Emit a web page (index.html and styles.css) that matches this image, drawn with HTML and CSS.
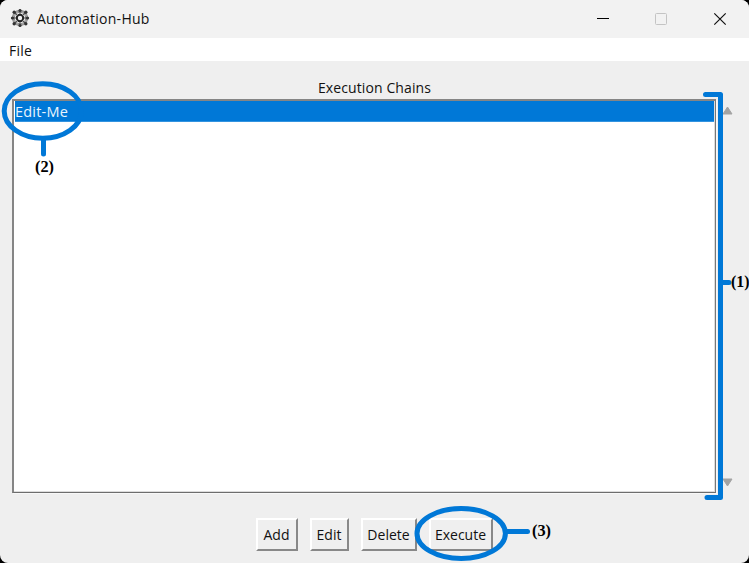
FILE: index.html
```html
<!DOCTYPE html>
<html lang="en">
<head>
<meta charset="utf-8">
<title>Automation-Hub</title>
<link rel="stylesheet" href="styles.css">
</head>
<body>
<div class="window">
  <header class="titlebar">
    <svg class="app-icon" width="20" height="20" viewBox="0 0 20 20">
      <circle cx="10" cy="10" r="7.2" fill="none" stroke="#999" stroke-width="2"/>
      <g fill="none" stroke="#444">
        <circle cx="10" cy="10" r="3.2" stroke-width="2" stroke="#222"/>
        <circle cx="10" cy="10" r="5.7" stroke-width="1" stroke="#888"/>
        <path d="M10 1v5M10 14v5M1 10h5M14 10h5M3.600 3.600l3.800 3.800M12.600 12.600l3.800 3.800M16.400 3.600l-3.800 3.800M7.400 12.600l-3.800 3.800" stroke="#555"/>
      </g>
      <g fill="#333">
        <circle cx="4.200" cy="4.200" r="1.700"/><circle cx="15.800" cy="4.200" r="1.700"/>
        <circle cx="4.200" cy="15.800" r="1.700"/><circle cx="15.800" cy="15.800" r="1.700"/>
        <circle cx="10" cy="2.500" r="1.600"/><circle cx="10" cy="17.500" r="1.600"/>
        <circle cx="2.500" cy="10" r="1.600"/><circle cx="17.500" cy="10" r="1.600"/>
      </g>
    </svg>
    <span class="title">Automation-Hub</span>
    <svg class="controls" width="132" height="14" viewBox="0 0 132 14" fill="none">
      <path d="M0 6.500h12" stroke="#000"/>
      <rect x="58.500" y="1.500" width="11" height="11" rx="1" stroke="#c4c4c4"/>
      <path d="M117.300 1.300l11.400 11.400M128.700 1.300l-11.400 11.400" stroke="#111" stroke-width="1.200"/>
    </svg>
  </header>
  <nav class="menubar"><span class="menu-item">File</span></nav>
  <main class="content">
    <h1 class="heading"><span>Execution Chains</span></h1>
    <div class="list-row">
      <div class="listbox"><div class="option"><span>Edit-Me</span></div></div>
      <div class="scrollbar">
        <svg width="11" height="9" viewBox="0 0 11 9"><path d="M5.500 1L10 8H1z" fill="#a3a3a3" stroke="#a3a3a3" stroke-linejoin="round"/></svg>
        <svg width="11" height="9" viewBox="0 0 11 9"><path d="M5.500 8L10 1H1z" fill="#a3a3a3" stroke="#a3a3a3" stroke-linejoin="round"/></svg>
      </div>
    </div>
    <div class="buttons">
      <button class="btn add"><span>Add</span></button>
      <button class="btn edit"><span>Edit</span></button>
      <button class="btn delete"><span>Delete</span></button>
      <button class="btn execute"><span>Execute</span></button>
    </div>
  </main>
  <svg class="callouts" width="749" height="563" viewBox="0 0 749 563">
    <g fill="none" stroke="#0078d7" stroke-width="5" stroke-linecap="round" stroke-linejoin="round">
      <ellipse cx="42.800" cy="111" rx="38.600" ry="27.300"/>
      <path d="M43.500 139v15"/>
      <path d="M705.500 94.500h15v403h-13.500M721 282.500h8"/>
      <ellipse cx="461.200" cy="533.500" rx="44.200" ry="25"/>
      <path d="M507 531.500h20.500"/>
    </g>
    <g class="callout-text">
      <text x="35" y="172" textLength="19" lengthAdjust="spacingAndGlyphs">(2)</text>
      <text x="731" y="287" textLength="18.500" lengthAdjust="spacingAndGlyphs">(1)</text>
      <text x="532" y="536" textLength="19" lengthAdjust="spacingAndGlyphs">(3)</text>
    </g>
  </svg>
</div>
</body>
</html>
```
FILE: styles.css
```css
* { box-sizing: border-box; }
body {
  margin: 0;
  background: #000;
  font-family: "Open Sans", "Noto Sans", sans-serif;
  font-size: 14px;
  color: #111;
}
.window {
  position: relative;
  display: flex;
  flex-direction: column;
  width: 749px;
  height: 563px;
  overflow: hidden;
  border-radius: 8px;
  background: #efefef;
}
.titlebar {
  display: flex;
  align-items: center;
  height: 38px;
  padding: 0 17px 2px 10px;
  background: #f2f2f2;
}
.title { margin-left: 7px; letter-spacing: 0.25px; }
.controls { margin: 2px 3px 0 auto; }
.menubar {
  display: flex;
  align-items: center;
  height: 23px;
  padding: 2px 9px 0;
  background: #fff;
}
.menu-item { letter-spacing: 0.2px; }
.content {
  display: flex;
  flex: 1;
  flex-direction: column;
  padding: 17px 13px 12px 12px;
}
.heading {
  height: 21px;
  margin: 0;
  padding-left: 1px;
  font-size: 14px;
  font-weight: 400;
  line-height: 20px;
  letter-spacing: 0.1px;
  text-align: center;
}
.list-row { display: flex; height: 395px; }
.listbox {
  width: 704px;
  height: 394px;
  margin-right: 1px;
  border-style: solid;
  border-width: 2px 1px 1px 2px;
  border-color: #858585 #777 #6d6d6d #858585;
  box-shadow: inset -1px -1px #dcdcdc, 1px 1px #f8f8f8;
  background: #fff;
}
.option {
  height: 21px;
  margin: 0 1px 0 1px;
  border-bottom: 1px solid #3393df;
  background: #0078d7;
  color: #e9f4fd;
  font-size: 14.5px;
  line-height: 21px;
  letter-spacing: 0.2px;
}
.scrollbar {
  display: flex;
  flex-direction: column;
  justify-content: space-between;
  padding: 7px 0 7px 5px;
}
.buttons {
  display: flex;
  gap: 12px;
  margin: 24px 0 0 244px;
}
.btn {
  height: 33px;
  padding: 0;
  border: 2px solid;
  border-color: #fff #888 #888 #fff;
  background: #efefef;
  color: #111;
  font: inherit;
  line-height: 28px;
}
.btn span { margin-right: 1px; }
.add { width: 42px; }
.edit { width: 39px; }
.delete { width: 56px; }
.execute { width: 64px; }
.callouts { position: absolute; inset: 0; }
.callout-text {
  font: bold 16px "Liberation Serif", serif;
  fill: #000;
}
```
